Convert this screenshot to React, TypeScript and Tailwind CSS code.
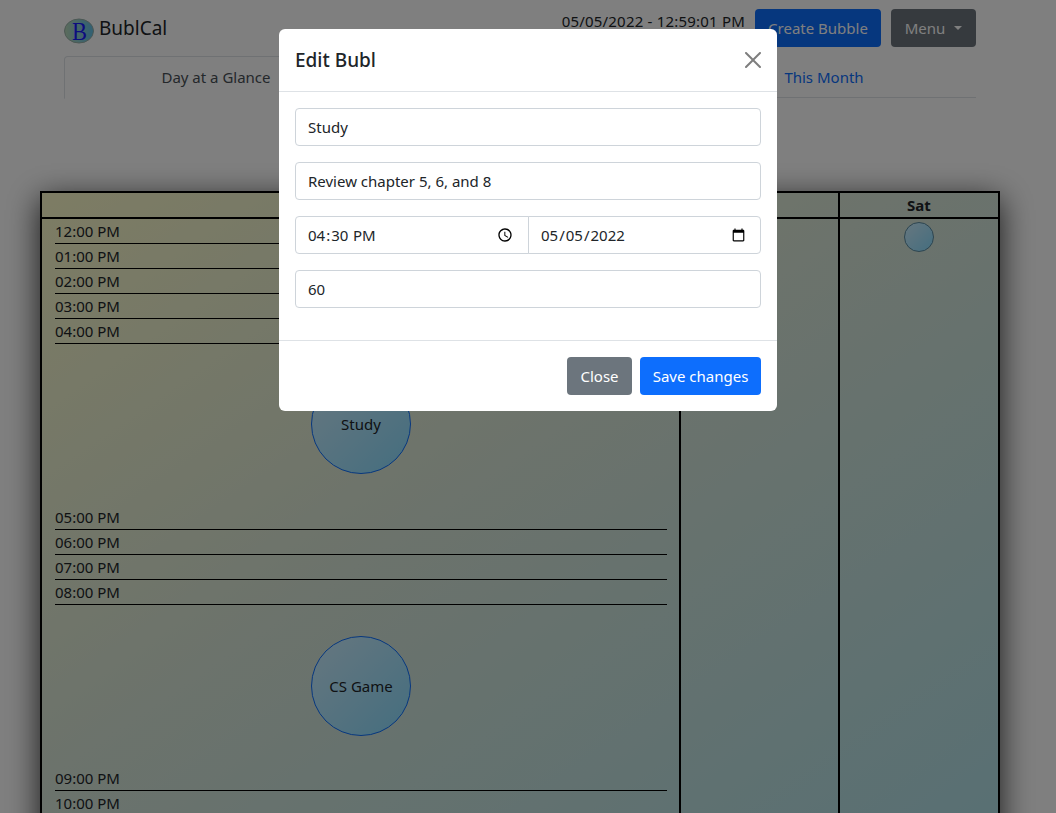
import { ReactNode } from "react";

const FONT = "font-['Noto_Sans','Open_Sans',sans-serif]";

function TimeRow({ label }: { label: string }) {
  return <div className="h-[25px] border-b border-black text-[15px] leading-6 text-[#212529]">{label}</div>;
}

function Bubl({ size, children }: { size: string; children?: ReactNode }) {
  return (
    <div
      className={`${size} mx-auto flex items-center justify-center rounded-full border bg-gradient-to-br from-[#cceeff] to-[#88dcff] text-[15px] text-[#212529]`}
    >
      {children}
    </div>
  );
}

function Field({ value }: { value: string }) {
  return (
    <input
      type="text"
      defaultValue={value}
      className="block h-[38px] w-full rounded-[4px] border border-[#ced4da] bg-white px-3 text-[15px] text-[#212529] outline-none"
    />
  );
}

function Logo() {
  return (
    <svg width="30" height="26" viewBox="0 0 30 26" className="mt-[6px] shrink-0 overflow-visible">
      <defs>
        <linearGradient id="logoFill" x1="0" y1="0" x2="1" y2="0">
          <stop offset="0" stopColor="#b8d8b8" />
          <stop offset="1" stopColor="#60c0e8" />
        </linearGradient>
      </defs>
      <ellipse cx="15" cy="13" rx="14.5" ry="12" fill="url(#logoFill)" stroke="#9ab0a8" />
      <text
        x="8"
        y="22"
        fontSize="26"
        textLength="15"
        lengthAdjust="spacingAndGlyphs"
        fill="#1a1aff"
        fontFamily="Liberation Serif, serif"
      >
        B
      </text>
    </svg>
  );
}

export default function App() {
  const afternoon = ["12:00 PM", "01:00 PM", "02:00 PM", "03:00 PM", "04:00 PM"];
  const evening = ["05:00 PM", "06:00 PM", "07:00 PM", "08:00 PM"];
  const night = ["09:00 PM", "10:00 PM"];

  return (
    <div className={`${FONT} relative h-[813px] overflow-hidden bg-white`}>
      <div className="w-[1040px]">
        <div className="mx-auto w-[912px] pt-[9px]">
          <div className="flex h-[38px] items-center">
            <Logo />
            <span className="ml-[5px] mt-px text-[19px] text-[#212529]">BublCal</span>
            <span className="ml-auto mr-[10px] self-start text-[15px] leading-6 tracking-[0.2px] text-[#212529]">05/05/2022 - 12:59:01 PM</span>
            <button className="mr-[10px] h-[38px] w-[126px] rounded-[4px] bg-[#0d6efd] text-[15px] text-white">Create Bubble</button>
            <button className="flex h-[38px] w-[85px] items-center justify-center gap-[9px] rounded-[4px] bg-[#6c757d] text-[15px] text-white">
              Menu
              <span className="h-0 w-0 border-x-[4.8px] border-t-[4.8px] border-x-transparent border-t-white" />
            </button>
          </div>
          <div className="mt-[9px] grid h-[42px] grid-cols-3 border-b border-[#dee2e6] text-center text-[15px] leading-[42px]">
            <div className="-mb-px rounded-t-[4px] border border-b-white border-[#dee2e6] bg-white leading-[40px] text-[#495057]">Day at a Glance</div>
            <div className="text-[#0d6efd]">This Week</div>
            <div className="text-[#0d6efd]">This Month</div>
          </div>
        </div>

        <div className="mx-auto mt-[93px] w-[960px] border-2 border-black bg-gradient-to-br from-[#fbf9c8] via-[#d8e6d8] via-45% to-[#b0e0e8] pb-[30px] shadow-[0_8px_30px_rgba(0,0,0,0.8)]">
          <div className="grid h-[26px] grid-cols-[637px_159px_160px] border-b-2 border-black text-center text-[15px] font-bold leading-6 text-[#212529]">
            <div>Thu</div>
            <div className="border-l-2 border-black">Fri</div>
            <div className="border-l-2 border-black">Sat</div>
          </div>
          <div className="grid grid-cols-[637px_159px_160px]">
            <div className="pl-[13px] pr-[12px]">
              {afternoon.map((t) => (
                <TimeRow key={t} label={t} />
              ))}
              <div className="pb-[31px] pt-[30px]">
                <Bubl size="h-[100px] w-[100px] border-[#0d6efd]">Study</Bubl>
              </div>
              {evening.map((t) => (
                <TimeRow key={t} label={t} />
              ))}
              <div className="pb-[30px] pt-[31px]">
                <Bubl size="h-[100px] w-[100px] border-[#0d6efd]">CS Game</Bubl>
              </div>
              {night.map((t) => (
                <TimeRow key={t} label={t} />
              ))}
            </div>
            <div className="border-l-2 border-black" />
            <div className="border-l-2 border-black pt-[3px]">
              <Bubl size="h-[30px] w-[30px] border-[#5a8aa0]" />
            </div>
          </div>
        </div>
      </div>

      {/* Backdrop */}
      <div className="absolute inset-0 bg-black/50" />

      {/* Edit modal */}
      <div className="absolute left-[279px] top-[29px] w-[498px] rounded-[6px] bg-white">
        <div className="flex h-[63px] items-center justify-between border-b border-[#dee2e6] px-4">
          <h5 className="text-[19px] font-medium text-[#212529]">Edit Bubl</h5>
          <svg width="16" height="16" viewBox="0 0 16 16" className="opacity-50">
            <path d="M.293.293a1 1 0 011.414 0L8 6.586 14.293.293a1 1 0 111.414 1.414L9.414 8l6.293 6.293a1 1 0 01-1.414 1.414L8 9.414l-6.293 6.293a1 1 0 01-1.414-1.414L6.586 8 .293 1.707a1 1 0 010-1.414z" />
          </svg>
        </div>
        <div className="flex h-[249px] flex-col gap-4 border-b border-[#dee2e6] p-4">
          <Field value="Study" />
          <Field value="Review chapter 5, 6, and 8" />
          <div className="flex">
            <input
              type="time"
              defaultValue="16:30"
              className="h-[38px] w-[234px] rounded-l-[4px] border border-[#ced4da] pl-[11px] pr-3 text-[15px] text-[#212529] outline-none"
            />
            <input
              type="date"
              defaultValue="2022-05-05"
              className="-ml-px h-[38px] flex-1 rounded-r-[4px] border border-[#ced4da] pl-[11px] pr-3 text-[15px] text-[#212529] outline-none"
            />
          </div>
          <Field value="60" />
        </div>
        <div className="flex h-[70px] items-center justify-end gap-2 px-4">
          <button className="h-[38px] w-[65px] rounded-[4px] bg-[#6c757d] text-[15px] text-white">Close</button>
          <button className="h-[38px] w-[121px] rounded-[4px] bg-[#0d6efd] text-[15px] text-white">Save changes</button>
        </div>
      </div>
    </div>
  );
}
